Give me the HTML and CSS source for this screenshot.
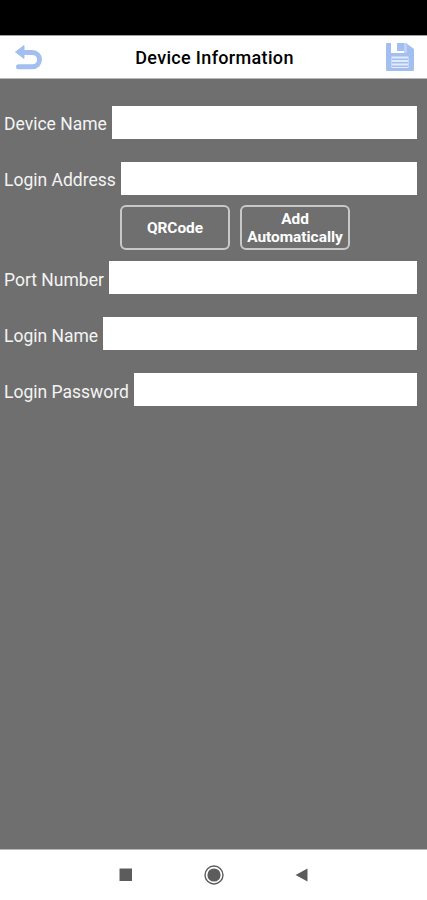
FILE: index.html
```
<!DOCTYPE html>
<html lang="en">
<head>
    <meta charset="UTF-8">
    <title>Device Information</title>
    <link rel="stylesheet" href="styles.css">
</head>
<body>
<div id="statusBar"></div>
<!-- title bar -->
<div id="header">
    <a class="back" href="javascript:;">
        <svg width="28" height="26" viewBox="0 0 28 26">
            <path d="M7 7.5H17C21.5 7.5 24.5 10.5 24.5 14.5S21.5 21.7 17 21.7H3.5" fill="none" stroke="#a3bff0" stroke-width="5" stroke-linecap="round"/>
            <path d="M.5 7L9 .5V13.5Z" fill="#a3bff0" stroke="#a3bff0" stroke-linejoin="round"/>
        </svg>
    </a>
    <h1>Device Information</h1>
    <a class="save" href="javascript:;">
        <svg width="28" height="28" viewBox="0 0 28 28">
            <path d="M1 0H5V10H20V0L28 6V27Q28 28 27 28H1Q0 28 0 27V1Q0 0 1 0Z" fill="#a3bff0"/>
            <path d="M11 0H18V8H11Z" fill="#a3bff0"/>
            <path d="M18 0H21V10H18Z" fill="#bdd1f7"/>
            <path d="M5.5 13.5H22.5V25H5.5Z" fill="#e2ebfc"/>
            <path d="M6 16.2H22M6 19.7H22M6 23.2H22" stroke="#a3bff0" stroke-width="1.6"/>
        </svg>
    </a>
</div>
<!-- login form -->
<div id="content">
    <div class="row">
        <label for="deviceName">Device Name</label>
        <input type="text" id="deviceName">
    </div>
    <div class="row">
        <label for="loginAddress">Login Address</label>
        <input type="text" id="loginAddress">
    </div>
    <div class="buttons">
        <button type="button">QRCode</button>
        <button type="button">Add<br>Automatically</button>
    </div>
    <div class="row">
        <label for="portNumber">Port Number</label>
        <input type="text" id="portNumber">
    </div>
    <div class="row">
        <label for="loginName">Login Name</label>
        <input type="text" id="loginName">
    </div>
    <div class="row">
        <label for="loginPassword">Login Password</label>
        <input type="password" id="loginPassword">
    </div>
</div>
<!-- system navigation -->
<div id="navBar">
    <svg width="14" height="14" viewBox="0 0 14 14">
        <path d="M.5 .5H13V13H.5Z" fill="#5c5c5c"/>
    </svg>
    <svg width="20" height="20" viewBox="0 0 20 20">
        <circle cx="10" cy="10" r="9" fill="none" stroke="#5c5c5c" stroke-width="1.4"/>
        <circle cx="10" cy="10" r="6.6" fill="#5c5c5c"/>
    </svg>
    <svg width="14" height="14" viewBox="0 0 14 14">
        <path d="M.5 7L12.5 .5V13.5Z" fill="#5c5c5c"/>
    </svg>
</div>
</body>
</html>
```
FILE: styles.css
```
* {
    margin: 0;
    padding: 0;
    box-sizing: border-box;
}

body {
    display: flex;
    flex-direction: column;
    height: 900px;
    background-color: #6f6f6f;
    font-family: Roboto, sans-serif;
}

#statusBar {
    height: 35px;
    background-color: black;
}

#header {
    display: flex;
    align-items: center;
    justify-content: space-between;
    height: 44px;
    padding: 0 13px 0 15px;
    background-color: white;
    border-top: 1px solid #a0a0a0;
    border-bottom: 1px solid #b8b8b8;
}

#header svg {
    display: block;
}

#header .back {
    padding-top: 2px;
}

#header h1 {
    padding-top: 1px;
    font-size: 18px;
    font-weight: 500;
    letter-spacing: .33px;
    color: black;
    line-height: 20px;
}

#content {
    flex: 1;
    padding: 27px 10px 0 4px;
}

.row {
    display: flex;
    align-items: center;
    gap: 5px;
    height: 33px;
    margin-bottom: 23px;
}

.row label {
    padding-top: 3px;
    font-size: 17.5px;
    color: #f4f4f4;
    white-space: nowrap;
}

.buttons ~ .row label {
    padding-top: 5px;
}

.row input {
    flex: 1;
    min-width: 0;
    height: 33px;
    border: none;
    background-color: white;
}

.buttons {
    display: flex;
    gap: 10px;
    margin: -13px 0 11px 116px;
}

.buttons button {
    width: 110px;
    height: 45px;
    border: 2px solid #c8c8c8;
    border-radius: 6px;
    background: none;
    color: white;
    font: bold 15.4px/18px Roboto, sans-serif;
}

/* bottom bar */
#navBar {
    display: flex;
    align-items: center;
    justify-content: center;
    gap: 71px;
    height: 51px;
    background-color: white;
    border-top: 1px solid #b8b8b8;
}
```
